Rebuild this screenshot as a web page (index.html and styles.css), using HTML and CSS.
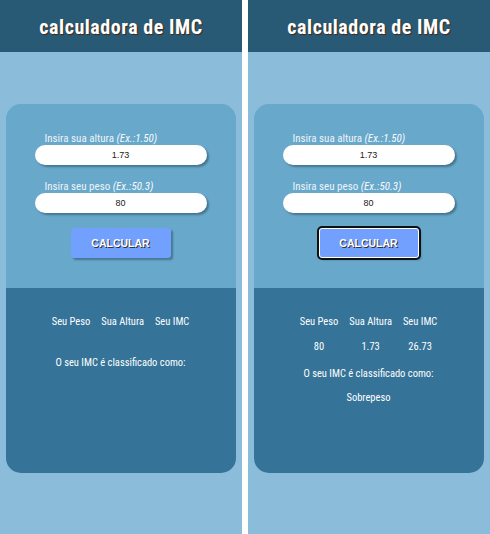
FILE: index.html
```html
<!DOCTYPE html>
<html lang="pt">
<head>
<meta charset="utf-8">
<link rel="stylesheet" href="styles.css">
</head>
<body>
<div class="page">
  <section class="panel">
    <header class="bar"><h1 class="title">calculadora de IMC</h1></header>
    <div class="card">
      <div class="form">
        <label class="label">Insira sua altura <em>(Ex.:1.50)</em></label>
        <input class="field" type="text" value="1.73">
        <label class="label second">Insira seu peso <em>(Ex.:50.3)</em></label>
        <input class="field" type="text" value="80">
        <button class="btn">CALCULAR</button>
      </div>
      <div class="result">
        <table class="table">
          <tr><td>Seu Peso</td><td>Sua Altura</td><td>Seu IMC</td></tr>
          <tr><td></td><td></td><td></td></tr>
        </table>
        <p class="class-text">O seu IMC é classificado como:</p>
        <p class="class-value"></p>
      </div>
    </div>
  </section>
  <section class="panel">
    <header class="bar"><h1 class="title">calculadora de IMC</h1></header>
    <div class="card">
      <div class="form">
        <label class="label">Insira sua altura <em>(Ex.:1.50)</em></label>
        <input class="field" type="text" value="1.73">
        <label class="label second">Insira seu peso <em>(Ex.:50.3)</em></label>
        <input class="field" type="text" value="80">
        <button class="btn focused">CALCULAR</button>
      </div>
      <div class="result">
        <table class="table">
          <tr><td>Seu Peso</td><td>Sua Altura</td><td>Seu IMC</td></tr>
          <tr><td>80</td><td>1.73</td><td>26.73</td></tr>
        </table>
        <p class="class-text">O seu IMC é classificado como:</p>
        <p class="class-value">Sobrepeso</p>
      </div>
    </div>
  </section>
</div>
</body>
</html>
```

FILE: styles.css
```css
* { box-sizing: border-box; }
html, body { margin: 0; padding: 0; background: #ffffff; }
body { width: 490px; height: 534px; overflow: hidden; }
.page { display: flex; gap: 6px; height: 534px; }
.panel {
  width: 242px;
  height: 534px;
  background: #8bbcd9;
  display: flex;
  flex-direction: column;
  align-items: center;
}
.bar {
  width: 100%;
  height: 52px;
  background: #295a75;
  display: flex;
  align-items: center;
  justify-content: center;
  padding-top: 1px;
}
.title {
  margin: 0;
  font-family: "Roboto Condensed", "Roboto", sans-serif;
  font-weight: 700;
  font-size: 20px;
  letter-spacing: 0.55px;
  color: #ffffff;
  text-shadow: 1px 1px 1px #4a2418;
}
.card {
  margin-top: 52px;
  margin-right: 1px;
  width: 230px;
  height: 369px;
  border-radius: 15px;
  overflow: hidden;
  display: flex;
  flex-direction: column;
}
.form {
  height: 184px;
  background: #67a8cb;
  display: flex;
  flex-direction: column;
  align-items: center;
  padding-top: 28px;
}
.label {
  align-self: flex-start;
  margin-left: 39px;
  height: 13px;
  line-height: 13px;
  font-family: "Roboto Condensed", "Roboto", sans-serif;
  font-size: 11px;
  color: #eef3f7;
  white-space: nowrap;
}
.label em { color: #f8fbfd; }
.label.second { margin-top: 15px; }
.field {
  width: 172px;
  height: 20px;
  border: none;
  border-radius: 10px;
  background: #ffffff;
  box-shadow: 2px 2px 2px rgba(0, 0, 0, 0.3);
  text-align: center;
  font-family: "Liberation Sans", Arial, sans-serif;
  font-size: 9px;
  color: #222222;
  padding: 0;
  outline: none;
}
.btn {
  margin-top: 15px;
  width: 100px;
  height: 30px;
  border: none;
  border-radius: 3px;
  background: #72a0fe;
  box-shadow: 2px 2px 2px rgba(0, 0, 0, 0.3);
  font-family: "Liberation Sans", Arial, sans-serif;
  font-weight: 700;
  font-size: 10.5px;
  color: #ffffff;
  text-shadow: 1px 1px 0 #333333;
  padding: 0;
}
.btn.focused {
  outline: 2px solid #111111;
  outline-offset: 0;
  box-shadow: inset 0 0 0 1px #ffffff, 2px 2px 2px rgba(0, 0, 0, 0.3);
}
.result {
  flex: 1;
  background: #357398;
  padding-top: 21px;
  font-family: "Roboto Condensed", "Roboto", sans-serif;
  font-size: 10.5px;
  color: #ffffff;
  text-align: center;
}
.table {
  margin: 0 auto;
  border-collapse: collapse;
}
.table td {
  padding: 7px 5.5px;
  line-height: 11px;
  text-align: center;
  white-space: nowrap;
}
.class-text, .class-value {
  margin: 7.5px 0 0;
  line-height: 13px;
}
.class-value { margin-top: 11px; }
```
